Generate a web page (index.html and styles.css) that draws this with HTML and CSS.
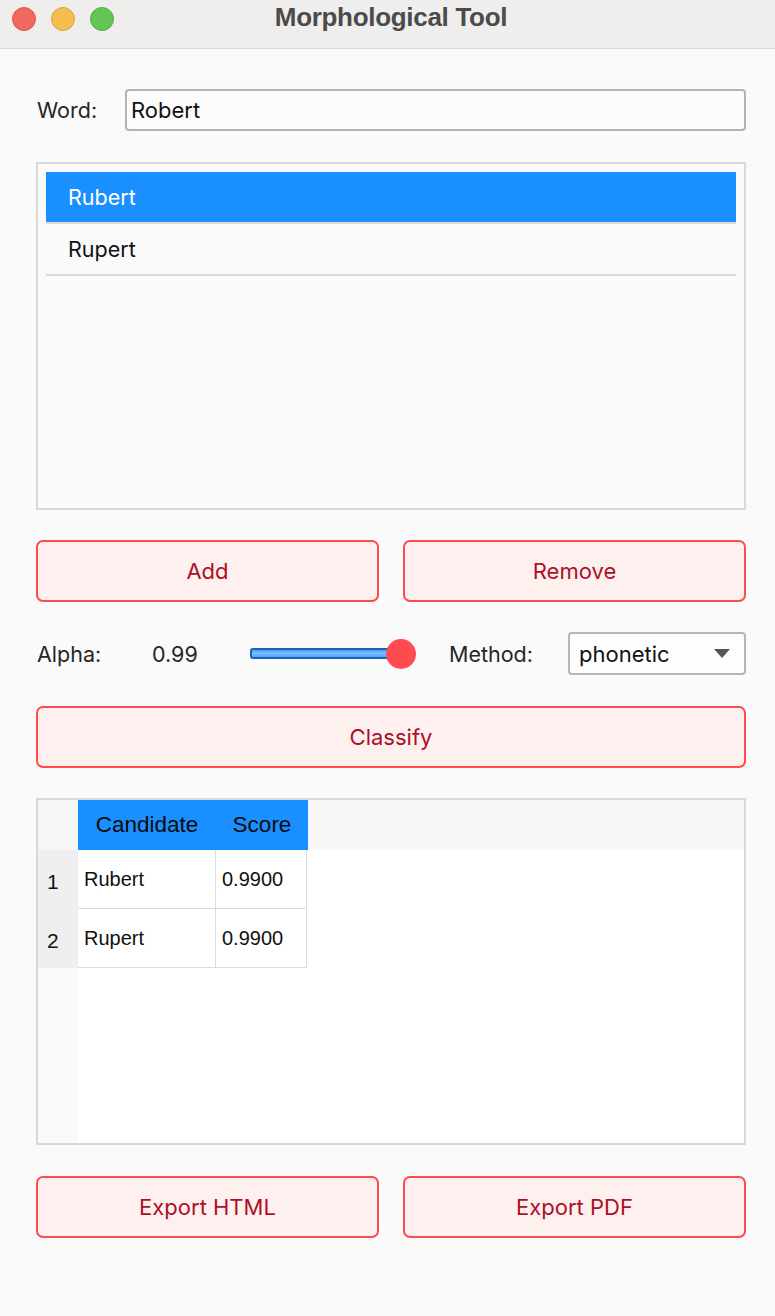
FILE: index.html
```html
<!DOCTYPE html>
<html lang="en">
<head>
    <meta charset="UTF-8">
    <title>Morphological Tool</title>
    <link rel="stylesheet" href="styles.css">
</head>
<body>
    <div class="window">
        <div class="title-bar">
            <div class="lights">
                <span class="light red"></span>
                <span class="light yellow"></span>
                <span class="light green"></span>
            </div>
            <div class="title">Morphological Tool</div>
        </div>

        <div class="content">
            <div class="word-row">
                <label class="field-label">Word:</label>
                <div class="text-input">Robert</div>
            </div>

            <div class="list-box">
                <div class="list-item selected">Rubert</div>
                <div class="list-item">Rupert</div>
            </div>

            <div class="button-row">
                <button class="btn">Add</button>
                <button class="btn">Remove</button>
            </div>

            <div class="param-row">
                <span class="alpha-label">Alpha:</span>
                <span class="alpha-value">0.99</span>
                <div class="slider">
                    <div class="slider-track"></div>
                    <div class="slider-knob"></div>
                </div>
                <span class="method-label">Method:</span>
                <div class="combo">
                    <span>phonetic</span>
                    <span class="combo-arrow"></span>
                </div>
            </div>

            <button class="btn btn-wide">Classify</button>

            <div class="table-box">
                <div class="table-head">
                    <div class="corner"></div>
                    <div class="th th-cand">Candidate</div>
                    <div class="th th-score">Score</div>
                    <div class="head-rest"></div>
                </div>
                <div class="table-body">
                    <div class="row-headers">
                        <div class="row-num">1</div>
                        <div class="row-num">2</div>
                    </div>
                    <div class="cells">
                        <div class="tr">
                            <div class="td td-cand">Rubert</div>
                            <div class="td td-score">0.9900</div>
                        </div>
                        <div class="tr">
                            <div class="td td-cand">Rupert</div>
                            <div class="td td-score">0.9900</div>
                        </div>
                    </div>
                </div>
            </div>

            <div class="button-row export-row">
                <button class="btn">Export HTML</button>
                <button class="btn">Export PDF</button>
            </div>
        </div>
    </div>
</body>
</html>
```

FILE: styles.css
```css
body {
    margin: 0;
    background-color: #f7f7f7;
    font-family: Inter, "Liberation Sans", sans-serif;
    color: #1e1e1e;
}

.window {
    width: 775px;
    height: 1316px;
    background-color: #fafafa;
}

/* Barra de titulo */
.title-bar {
    position: relative;
    height: 48px;
    background-color: #efeeec;
    border-bottom: 1px solid #d9d9d9;
    display: flex;
    align-items: center;
    justify-content: center;
}

.lights {
    position: absolute;
    left: 12px;
    top: 7px;
    display: flex;
    gap: 15px;
}

.light {
    width: 24px;
    height: 24px;
    border-radius: 50%;
    box-sizing: border-box;
}

.red { background-color: #ee6a5f; border: 1px solid #d9564b; }
.yellow { background-color: #f5be4f; border: 1px solid #dca53c; }
.green { background-color: #62c554; border: 1px solid #52ad43; }

.title {
    font-family: "Liberation Sans", Arial, sans-serif;
    font-weight: bold;
    font-size: 26px;
    letter-spacing: -0.3px;
    color: #4b4b4b;
    margin-top: -14px;
    margin-left: 7px;
}

.content {
    padding: 40px 29px 0 36px;
}

.word-row {
    display: flex;
    align-items: center;
}

.field-label {
    width: 88px;
    font-size: 21.5px;
    padding-left: 1px;
    color: #262626;
}

.text-input {
    flex: 1;
    height: 42px;
    box-sizing: border-box;
    border: 2px solid #b3b3b3;
    border-radius: 4px;
    background-color: #fcfcfc;
    font-size: 22px;
    padding: 0 4px;
    display: flex;
    align-items: center;
    color: #111;
}

.list-box {
    margin-top: 31px;
    height: 348px;
    box-sizing: border-box;
    border: 2px solid #d8d8d8;
    padding: 8px;
}

.list-item {
    height: 50px;
    border-bottom: 2px solid #d9d9d9;
    display: flex;
    align-items: center;
    padding-left: 22px;
    font-size: 21.5px;
    color: #111;
}

.list-item.selected {
    background-color: #1a8fff;
    color: white;
}

.button-row {
    margin-top: 30px;
    display: flex;
    gap: 24px;
}

.btn {
    flex: 1;
    height: 62px;
    background-color: #fff0f0;
    border: 2px solid #ff4b4f;
    border-radius: 7px;
    color: #ae0f25;
    font-family: Inter, "Liberation Sans", sans-serif;
    font-size: 22px;
    cursor: pointer;
}

.btn-wide {
    display: block;
    width: 100%;
    margin-top: 31px;
}

.param-row {
    margin-top: 30px;
    height: 43px;
    display: flex;
    align-items: center;
    font-size: 21.5px;
    color: #262626;
}

.alpha-label {
    width: 115px;
    padding-left: 1px;
}

.alpha-value {
    width: 98px;
}

.slider {
    position: relative;
    width: 166px;
    height: 43px;
}

.slider-track {
    position: absolute;
    left: 0;
    top: 16px;
    width: 152px;
    height: 11px;
    box-sizing: border-box;
    border: 2px solid #1a64b8;
    border-radius: 3px;
    background: linear-gradient(#4aa0ff, #7dbcff 50%, #4aa0ff);
}

.slider-knob {
    position: absolute;
    left: 136px;
    top: 7px;
    width: 30px;
    height: 30px;
    border-radius: 50%;
    background-color: #ff4b50;
}

.method-label {
    width: 119px;
    margin-left: 33px;
}

.combo {
    flex: 1;
    height: 43px;
    box-sizing: border-box;
    border: 2px solid #b5b5b5;
    border-radius: 4px;
    background-color: #fdfdfd;
    display: flex;
    align-items: center;
    justify-content: space-between;
    padding: 0 14px 0 9px;
    font-size: 22px;
    color: #111;
}

.combo-arrow {
    width: 0;
    height: 0;
    border-left: 8px solid transparent;
    border-right: 8px solid transparent;
    border-top: 9px solid #555;
}

/* Tabla de resultados */
.table-box {
    margin-top: 30px;
    height: 347px;
    box-sizing: border-box;
    border: 2px solid #d8d8d8;
    background-color: #f9f9f9;
    display: flex;
    flex-direction: column;
    font-family: "Liberation Sans", Arial, sans-serif;
}

.table-head {
    display: flex;
    height: 50px;
}

.corner {
    width: 40px;
    background-color: #f7f7f7;
}

.th {
    background-color: #1a8fff;
    color: #0a0a0a;
    font-size: 22.5px;
    display: flex;
    align-items: center;
    justify-content: center;
}

.th-cand { width: 138px; }
.th-score { width: 92px; }

.head-rest {
    flex: 1;
    background-color: #f7f7f7;
}

.table-body {
    flex: 1;
    display: flex;
}

.row-headers {
    width: 40px;
    background-color: #f9f9f9;
}

.row-num {
    height: 59px;
    background-color: #efefef;
    font-size: 21px;
    display: flex;
    align-items: center;
    padding-left: 9px;
    padding-top: 4px;
    box-sizing: border-box;
    color: #111;
}

.cells {
    flex: 1;
    background-color: white;
}

.tr {
    display: flex;
    height: 59px;
}

.td {
    box-sizing: border-box;
    border-right: 1px solid #dcdcdc;
    border-bottom: 1px solid #dcdcdc;
    font-size: 20px;
    display: flex;
    align-items: center;
    padding-left: 6px;
    color: #111;
}

.td-cand { width: 138px; }
.td-score { width: 91px; }

.export-row {
    margin-top: 31px;
}
```
